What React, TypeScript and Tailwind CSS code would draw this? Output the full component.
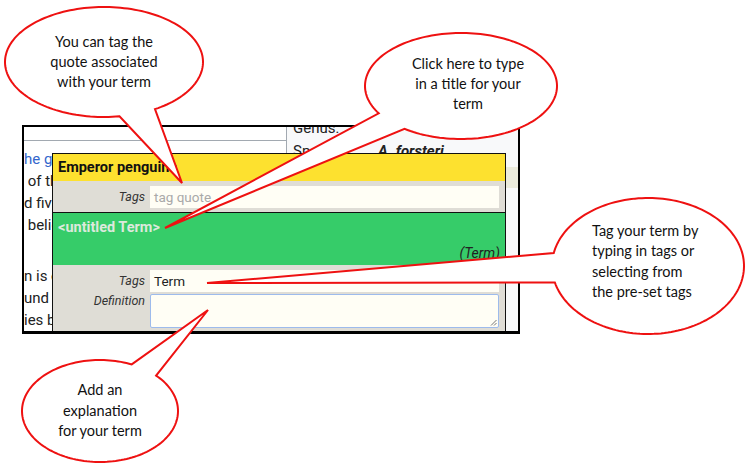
import React from "react";

function bubblePath(
  cx: number,
  cy: number,
  rx: number,
  ry: number,
  a1deg: number,
  a2deg: number,
  tx: number,
  ty: number
): string {
  const TAU = Math.PI * 2;
  const a1 = (a1deg * Math.PI) / 180;
  const a2 = (a2deg * Math.PI) / 180;
  const f = (((a2 - a1) % TAU) + TAU) % TAU;
  let start: number;
  let span: number;
  if (f > Math.PI) {
    start = a1;
    span = f;
  } else {
    start = a2;
    span = TAU - f;
  }
  const n = 160;
  const pts: string[] = [];
  for (let i = 0; i <= n; i++) {
    const a = start + (span * i) / n;
    pts.push(`${(cx + rx * Math.cos(a)).toFixed(2)} ${(cy + ry * Math.sin(a)).toFixed(2)}`);
  }
  return `M ${pts[0]} L ${pts.slice(1).join(" L ")} L ${tx} ${ty} Z`;
}

const bubbles = [
  { cx: 104, cy: 62, rx: 99, ry: 55, a1: 81, a2: 59, tx: 182, ty: 183 },
  { cx: 461, cy: 86, rx: 96, ry: 53, a1: 149, a2: 126, tx: 165, ty: 228 },
  { cx: 648, cy: 266, rx: 96, ry: 68, a1: 191, a2: 166, tx: 207, ty: 283 },
  { cx: 100, cy: 411, rx: 78, ry: 51, a1: -66, a2: -44, tx: 208, ty: 310 },
];

export default function App() {
  return (
    <div
      className="relative w-[749px] h-[469px] overflow-hidden bg-white"
      style={{ fontFamily: "Roboto, 'Liberation Sans', Arial, sans-serif" }}
    >
      <div className="pt-[125px] pl-[22px]">
        <div className="relative w-[498px] h-[209px] border-2 border-b-[3px] border-black overflow-hidden flex">
          {/* article column */}
          <div className="w-[262px] shrink-0 bg-white flex flex-col">
            <div className="h-[27px] border-b border-[#a2a9b1]" />
            <div className="pt-[7px] text-[15px] leading-[22px] text-[#222] whitespace-nowrap">
              <div className="text-[#3366cc]">he ge</div>
              <div>&nbsp;of th</div>
              <div>d fiv</div>
              <div>&nbsp;belie</div>
            </div>
            <div className="mt-[29px] text-[15px] leading-[22px] text-[#222] whitespace-nowrap">
              <div>n is o</div>
              <div>und</div>
              <div>ies b</div>
            </div>
          </div>
          {/* infobox */}
          <div className="flex-1 bg-[#f8f9fa] border-l border-[#a2a9b1] flex flex-col">
            <div className="-mt-[10px] pl-[6px] text-[15px] leading-[22px] text-[#222]">
              <div className="h-[21px]">Genus:</div>
              <div className="mt-[2px] h-[22px] flex">
                <div className="w-[85px]">Species:</div>
                <div className="font-bold italic">A. forsteri</div>
              </div>
            </div>
            <div className="mt-[5px] h-[21px] bg-[#ebebdc]" />
          </div>

          {/* popup */}
          <div className="absolute left-[28px] top-[26px] w-[454px] border border-[#111] bg-[#dfddd6]">
            <div className="h-[27px] bg-[#fde12f] flex items-center pl-[5px] text-[14.5px] font-bold text-[#111]">
              Emperor penguins
            </div>
            <div className="flex items-center pt-[5px] pb-[4px] border-b border-[#111]">
              <div className="w-[92px] text-right text-[12.5px] italic text-[#333]">Tags</div>
              <div className="ml-[5px] w-[349px] h-[22px] bg-[#fffef5] flex items-center pl-[4px] text-[13.5px] text-[#a9a9a9]">
                tag quote
              </div>
            </div>
            <div className="h-[52px] bg-[#36cc69] flex flex-col justify-between pt-[5px] pb-[2px] px-[5px]">
              <div className="text-[14.5px] leading-[20px] font-bold text-[#dce9dc]">&lt;untitled Term&gt;</div>
              <div className="text-right text-[14px] leading-[20px] italic text-[#222]">(Term)</div>
            </div>
            <div className="pt-[5px] pb-[6px]">
              <div className="flex items-center">
                <div className="w-[92px] text-right text-[12.5px] italic text-[#333]">Tags</div>
                <div className="ml-[5px] w-[349px] h-[22px] bg-[#fffef5] flex items-center pl-[4px] text-[13.5px] text-[#222]">
                  Term
                </div>
              </div>
              <div className="flex items-start mt-[2px]">
                <div className="w-[92px] text-right text-[12.5px] leading-[14px] italic text-[#333]">Definition</div>
                <div className="relative ml-[5px] w-[349px] h-[34px] bg-[#fffef5] border border-[#9dbbec] rounded-[2px]">
                  <svg className="absolute right-[1px] bottom-[1px]" width="7" height="7" viewBox="0 0 7 7">
                    <path d="M6.5 1 L1 6.5 M6.5 4 L4 6.5" stroke="#777" strokeWidth="1" />
                  </svg>
                </div>
              </div>
            </div>
          </div>
        </div>
      </div>

      {/* callout drawings */}
      <svg className="absolute left-0 top-0" width="749" height="469" viewBox="0 0 749 469">
        {bubbles.map((b, i) => (
          <path
            key={i}
            d={bubblePath(b.cx, b.cy, b.rx, b.ry, b.a1, b.a2, b.tx, b.ty)}
            fill="#ffffff"
            stroke="#ee1111"
            strokeWidth="2"
            strokeLinejoin="miter"
          />
        ))}
      </svg>

      <div
        className="absolute inset-0 text-[14.5px] text-[#111]"
        style={{ fontFamily: "Lato, 'Open Sans', sans-serif" }}
      >
        <div className="absolute left-[24px] top-[32px] w-[160px] text-center leading-[20px]">
          You can tag the
          <br />
          quote associated
          <br />
          with your term
        </div>
        <div className="absolute left-[388px] top-[54px] w-[160px] text-center leading-[20px]">
          Click here to type
          <br />
          in a title for your
          <br />
          term
        </div>
        <div className="absolute left-[592px] top-[221px] w-[150px] leading-[20.4px]">
          Tag your term by
          <br />
          typing in tags or
          <br />
          selecting from
          <br />
          the pre-set tags
        </div>
        <div className="absolute left-[20px] top-[380px] w-[160px] text-center leading-[20.5px]">
          Add an
          <br />
          explanation
          <br />
          for your term
        </div>
      </div>
    </div>
  );
}
